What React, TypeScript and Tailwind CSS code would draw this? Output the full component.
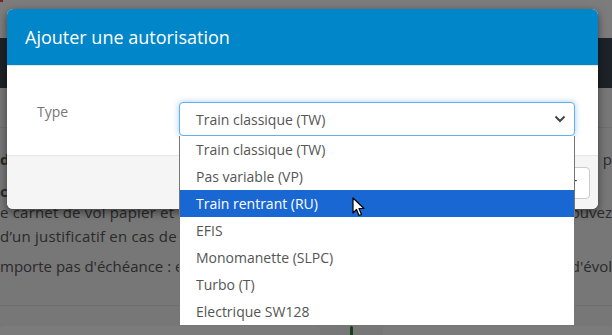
import React from "react";

const options = [
  "Train classique (TW)",
  "Pas variable (VP)",
  "Train rentrant (RU)",
  "EFIS",
  "Monomanette (SLPC)",
  "Turbo (T)",
  "Electrique SW128",
];

function Cursor() {
  return (
    <svg width="14" height="20" viewBox="0 0 14 20" className="absolute left-[172px] top-[7px]">
      <path d="M1 1 L1 16 L4.5 12.5 L7 18.5 L9.5 17.5 L7 11.5 L12 11.5 Z" fill="#fff" stroke="#000" strokeWidth="1.2" strokeLinejoin="round" />
    </svg>
  );
}

export default function App() {
  const selected = 2;

  return (
    <div className="relative h-[335px] w-[612px] overflow-hidden bg-[#eeeeee] font-['Open_Sans',sans-serif] text-[15px] text-[#555]">
      {/* page behind the modal */}
      <div className="h-[38px] bg-[#f8f8f8]">
        <div className="h-[2px] w-[3px] bg-[#d9534f]"></div>
      </div>
      <div className="h-[50px] bg-[#38444f]"></div>
      <div className="h-[40px] border-b border-[#dcdcdc]"></div>
      <div className="flex flex-col pt-[21px] leading-[20px]">
        <div className="flex justify-between">
          <span className="font-bold">de</span>
          <span>p</span>
        </div>
        <div className="mt-[12px] flex justify-between">
          <span className="font-bold">ce</span>
        </div>
        <div className="mt-[1px] flex justify-between">
          <span className="tracking-[0.2px]">e carnet de vol papier et que l'</span>
          <span>ouvez</span>
        </div>
        <div className="mt-[4px] flex justify-between">
          <span className="tracking-[0.2px]">d’un justificatif en cas de contr</span>
        </div>
        <div className="mt-[10px] flex justify-between">
          <span>mporte pas d'échéance : elle r</span>
          <span>d'évol</span>
        </div>
      </div>
      <div className="mt-[29px] border-t border-[#dddddd]"></div>
      <div className="flex gap-[30px] pt-[20px]">
        <div className="h-[20px] w-[320px] rounded bg-[#f7f7f7]"></div>
        <div className="h-[20px] w-[3px] rounded bg-[#2e7d32]"></div>
        <div className="h-[20px] flex-1 rounded bg-[#f7f7f7]"></div>
      </div>

      {/* backdrop */}
      <div className="absolute inset-0 bg-black/50"></div>

      {/* modal */}
      <div className="absolute left-[7px] top-[9px] w-[591px] rounded-[6px] bg-white shadow-[0_3px_9px_rgba(0,0,0,0.5)]">
        <div className="flex h-[56px] items-center rounded-t-[6px] bg-[#0086c9] px-[18px]">
          <h4 className="text-[18px] text-white">Ajouter une autorisation</h4>
        </div>
        <div className="flex h-[90px] items-start border-t border-[#e5e5e5] pl-[30px] pr-[22px] pt-[36px]">
          <label className="w-[142px] shrink-0 text-[14px] leading-[20px] text-[#777]">Type</label>
          <div className="relative shrink-0 text-[14px]">
            <div className="flex h-[34px] w-[396px] items-center justify-between rounded-[4px] border border-[#66afe9] bg-white pl-[16px] pr-[8px] shadow-[0_0_6px_rgba(102,175,233,0.6)]">
              <span>{options[0]}</span>
              <svg width="12" height="8" viewBox="0 0 12 8">
                <path d="M1.5 1.5 L6 6 L10.5 1.5" fill="none" stroke="#444" strokeWidth="2" />
              </svg>
            </div>
            <ul className="absolute left-0 top-[34px] z-10 w-[396px] border border-t-0 border-[#767676] bg-white">
              {options.map((o, i) => (
                <li
                  key={o}
                  className={`relative flex h-[27px] items-center pl-[16px] ${i === selected ? "bg-[#1967d2] text-white" : ""}`}
                >
                  {o}
                  {i === selected && <Cursor />}
                </li>
              ))}
            </ul>
          </div>
        </div>
        <div className="flex h-[54px] items-center justify-end rounded-b-[6px] border-t border-[#e5e5e5] bg-[#f5f5f5] px-[8px]">
          <button className="h-[32px] rounded-[4px] border border-[#cccccc] bg-white px-[12px] text-[14px] text-[#333]">Annuler</button>
        </div>
      </div>
    </div>
  );
}
